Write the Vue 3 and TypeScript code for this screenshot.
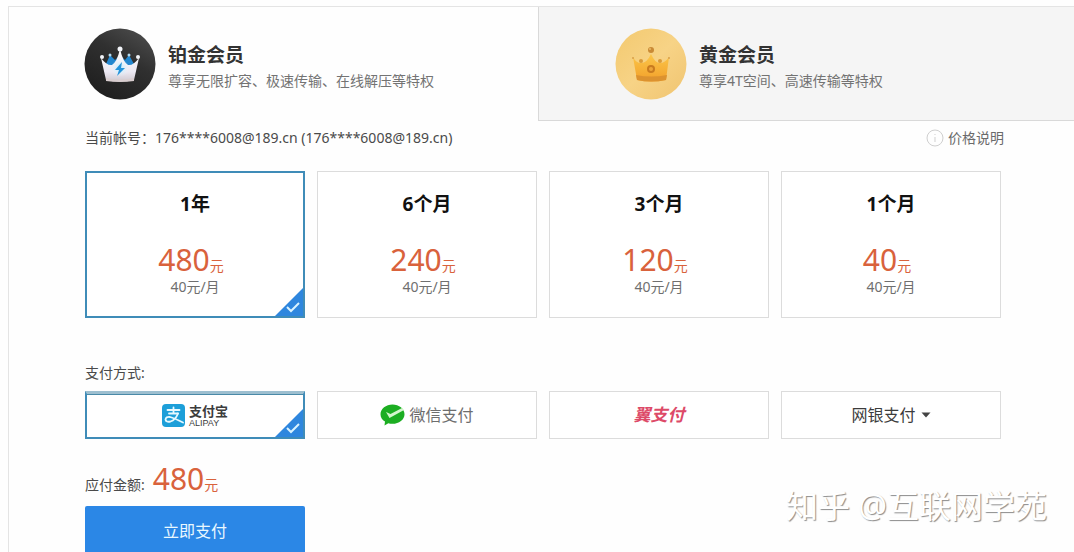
<script setup lang="ts">
import { computed, ref } from 'vue'

interface Tier {
  id: 'platinum' | 'gold'
  name: string
  perks: string
}

interface Plan {
  id: string
  term: string
  price: number
  monthly: string
}

const tiers: Tier[] = [
  { id: 'platinum', name: '铂金会员', perks: '尊享无限扩容、极速传输、在线解压等特权' },
  { id: 'gold', name: '黄金会员', perks: '尊享4T空间、高速传输等特权' },
]

const plans: Plan[] = [
  { id: 'y1', term: '1年', price: 480, monthly: '40元/月' },
  { id: 'm6', term: '6个月', price: 240, monthly: '40元/月' },
  { id: 'm3', term: '3个月', price: 120, monthly: '40元/月' },
  { id: 'm1', term: '1个月', price: 40, monthly: '40元/月' },
]

const methods = ['alipay', 'wechat', 'bestpay'] as const

const tier = ref<Tier['id']>('platinum')
const planId = ref('y1')
const method = ref<string>('alipay')
const bank = ref('bank')

const total = computed(() => plans.find((p) => p.id === planId.value)?.price ?? 0)
</script>

<template>
  <main class="panel">
    <div class="tabs" role="tablist">
      <button
        v-for="t in tiers"
        :key="t.id"
        type="button"
        role="tab"
        class="tab"
        :class="{ active: tier === t.id }"
        :aria-selected="tier === t.id"
        @click="tier = t.id"
      >
        <svg v-if="t.id === 'platinum'" class="badge" viewBox="0 0 72 72" aria-hidden="true">
          <defs>
            <linearGradient id="pBg" x1="0.2" y1="1" x2="0.8" y2="0">
              <stop offset="0" stop-color="#1d1d1d" />
              <stop offset="0.6" stop-color="#303030" />
              <stop offset="1" stop-color="#4c4c4c" />
            </linearGradient>
            <linearGradient id="pCrown" x1="0" y1="0" x2="0" y2="1">
              <stop offset="0" stop-color="#ffffff" />
              <stop offset="0.7" stop-color="#ece9f3" />
              <stop offset="1" stop-color="#cfc8cf" />
            </linearGradient>
            <radialGradient id="pGlow">
              <stop offset="0" stop-color="#b9ecff" />
              <stop offset="1" stop-color="#e8f8ff" stop-opacity="0" />
            </radialGradient>
          </defs>
          <circle cx="36" cy="36" r="35.5" fill="url(#pBg)" />
          <path d="M22 36 L26 27 L31 32 L36 27 L41 32 L45 27 L50 36 L46 42 H27 Z" fill="#2387cf" />
          <path
            d="M17 30 Q23 38 28 37 Q33 34 36 21 Q39 34 44 37 Q49 38 55 30 L50 52 Q36 55 22 52 Z"
            fill="url(#pCrown)"
          />
          <circle cx="36" cy="40" r="9" fill="url(#pGlow)" />
          <path d="M38 34 L31 42 H35 L33 48 L41 40 H37 Z" fill="#2493da" />
          <path d="M22 50 Q36 53 50 50 L50 53 Q36 55 22 53 Z" fill="#d8cdcf" />
          <g fill="#f3f5fa">
            <circle cx="18" cy="29" r="2" />
            <circle cx="54" cy="29" r="2" />
            <circle cx="36" cy="21" r="2.5" />
          </g>
          <g fill="#b5d9ee">
            <circle cx="26" cy="27" r="1.5" />
            <circle cx="45" cy="27" r="1.5" />
          </g>
        </svg>
        <svg v-else class="badge" viewBox="0 0 72 72" aria-hidden="true">
          <defs>
            <linearGradient id="gBg" x1="0" y1="0" x2="1" y2="1">
              <stop offset="0" stop-color="#f3c96f" />
              <stop offset="0.5" stop-color="#f7d386" />
              <stop offset="1" stop-color="#f0c470" />
            </linearGradient>
            <linearGradient id="gCrown" x1="0" y1="0" x2="0" y2="1">
              <stop offset="0" stop-color="#fbc64a" />
              <stop offset="1" stop-color="#f2a02a" />
            </linearGradient>
          </defs>
          <circle cx="36" cy="36" r="35.5" fill="url(#gBg)" />
          <path
            d="M18 29 Q21 35 26 35 Q32 35 36 26 Q40 35 45 35 Q50 35 54 29 L51 52 Q36 55 22 52 Z"
            fill="url(#gCrown)"
          />
          <path d="M21 47 Q36 50 52 47 L51 52 Q36 55 22 52 Z" fill="#dc922f" />
          <circle cx="36" cy="22" r="3" fill="#c98a35" />
          <circle cx="35" cy="21" r="1" fill="#e8b866" />
          <circle cx="26" cy="33" r="2" fill="#d89a3a" />
          <circle cx="45" cy="33" r="2" fill="#d89a3a" />
          <circle cx="18" cy="30" r="1" fill="#d8a04a" />
          <circle cx="54" cy="30" r="1" fill="#d8a04a" />
          <circle cx="36" cy="41" r="4" fill="#c87b1f" />
          <circle cx="36" cy="41" r="2" fill="#eda43a" />
        </svg>
        <span class="tab-text">
          <strong class="tab-name">{{ t.name }}</strong>
          <span class="tab-perks">{{ t.perks }}</span>
        </span>
      </button>
    </div>

    <div class="account">
      <span>当前帐号：176****6008@189.cn (176****6008@189.cn)</span>
      <a class="price-help" href="#price">
        <svg class="info" viewBox="0 0 18 18" aria-hidden="true">
          <circle cx="9" cy="9" r="8" fill="none" stroke="#cfcfcf" />
          <path d="M9 5v1M9 8v5" stroke="#cfcfcf" />
        </svg>
        <span>价格说明</span>
      </a>
    </div>

    <form class="order" @submit.prevent>
      <div class="options plans" role="radiogroup" aria-label="当前帐号">
        <label v-for="p in plans" :key="p.id" class="card plan" :class="{ selected: planId === p.id }">
          <input v-model="planId" class="radio" type="radio" name="plan" :value="p.id" />
          <strong class="term">{{ p.term }}</strong>
          <span class="price"><span class="amount">{{ p.price }}</span>元</span>
          <span class="monthly">{{ p.monthly }}</span>
          <svg v-if="planId === p.id" class="corner" viewBox="0 0 28 28" aria-hidden="true">
            <path d="M28 0V28H0Z" fill="#2e86de" />
            <path d="M12 19l4 4 8-8" fill="none" stroke="#d9f3ff" stroke-width="2" />
          </svg>
        </label>
      </div>

      <p id="pay-label" class="pay-label">支付方式:</p>
      <div class="options" role="radiogroup" aria-labelledby="pay-label">
        <label v-for="m in methods" :key="m" class="card method" :class="{ selected: method === m }">
          <input v-model="method" class="radio" type="radio" name="method" :value="m" />
          <template v-if="m === 'alipay'">
            <svg class="alipay-logo" viewBox="0 0 23 23" aria-hidden="true">
              <rect width="23" height="23" rx="4" fill="#1d9fd9" />
              <g fill="none" stroke="#e6f9ff" stroke-width="1.8" stroke-linecap="round">
                <path d="M11.5 3.5V9.5M5.5 6H17.500M7 9.5H16" />
                <path d="M16 9.5Q13.5 16 8.5 17.5Q4 18.5 3.5 15.5Q3.8 12.5 8 13Q12 14 21 18.5" />
              </g>
            </svg>
            <span class="alipay-text">
              <span class="alipay-cn">支付宝</span>
              <span class="alipay-en">ALIPAY</span>
            </span>
          </template>
          <template v-else-if="m === 'wechat'">
            <svg class="wechat-logo" viewBox="0 0 25 22" aria-hidden="true">
              <path
                d="M12.5 0.5C19 0.5 24.5 4.8 24.5 10.2C24.5 15.6 19 19.8 12.5 19.8C11 19.8 9.6 19.6 8.3 19.2L4.5 21.5L5 17.6C2.2 15.8 0.5 13.2 0.5 10.2C0.5 4.8 6 0.5 12.5 0.5Z"
                fill="#1cae22"
              />
              <path d="M6 8L9.500 14L24 6L22 4L10.5 10Z" fill="#d3f6cc" />
            </svg>
            <span class="wechat-text">微信支付</span>
          </template>
          <span v-else class="bestpay">翼支付</span>
          <svg v-if="method === m" class="corner" viewBox="0 0 28 28" aria-hidden="true">
            <path d="M28 0V28H0Z" fill="#2e86de" />
            <path d="M12 19l4 4 8-8" fill="none" stroke="#d9f3ff" stroke-width="2" />
          </svg>
        </label>
        <div class="card method">
          <select v-model="bank" class="bank" aria-label="网银支付">
            <option value="bank">网银支付</option>
          </select>
          <svg class="caret" viewBox="0 0 10 6" aria-hidden="true">
            <path d="M0.5 0.5H9.5L5 5.5Z" fill="#444" />
          </svg>
        </div>
      </div>

      <p class="total">
        <span>应付金额:</span>
        <span class="price"><span class="amount">{{ total }}</span>元</span>
      </p>
      <div class="options">
        <button type="submit" class="submit">立即支付</button>
      </div>
    </form>

    <div class="watermark">知乎 @互联网学苑</div>
  </main>
</template>

<style>
html {
  scrollbar-width: none;
}
body {
  background: #fefefe;
}
</style>

<style scoped>
.panel {
  position: relative;
  box-sizing: border-box;
  height: calc(100vh - 6px);
  margin: 6px 0 0 8px;
  border-top: 1px solid #e4e4e4;
  border-left: 1px solid #e4e4e4;
  overflow: hidden;
  color: #4a4a4a;
  font-family: 'Noto Sans', 'Open Sans', 'Noto Sans CJK SC', sans-serif;
  font-size: 14px;
  line-height: 20px;
}
p {
  margin: 0;
}
button,
select {
  font-family: inherit;
}
.tabs {
  display: grid;
  grid-template-columns: 529fr 536fr;
}
.tab {
  display: flex;
  align-items: center;
  gap: 12px;
  height: 114px;
  padding: 0 0 0 76px;
  border: 0;
  border-bottom: 1px solid #d9d9d9;
  border-left: 1px solid #d9d9d9;
  background: #f5f5f5;
  text-align: left;
  cursor: pointer;
}
.tab.active {
  padding-left: 74px;
  border-color: transparent;
  background: transparent;
}
.badge {
  flex: none;
  width: 72px;
  height: 72px;
}
.tab-text {
  display: grid;
  gap: 4px;
  padding-top: 6px;
}
.tab-name {
  color: #333;
  font-size: 19px;
  line-height: 24px;
}
.tab-perks {
  color: #737373;
  font-size: 14px;
  line-height: 20px;
}
.account {
  display: flex;
  justify-content: space-between;
  margin-top: 7px;
  padding: 0 70px 0 76px;
}
.price-help {
  display: flex;
  align-items: center;
  gap: 4px;
  color: #6a6a6a;
  text-decoration: none;
}
.info {
  width: 18px;
  height: 18px;
}
.order {
  padding: 0 73px 0 76px;
}
.options {
  display: grid;
  grid-template-columns: repeat(4, 1fr);
  gap: 12px;
}
.plans {
  margin-top: 23px;
}
.card {
  position: relative;
  display: flex;
  box-sizing: border-box;
  border: 1px solid #dcdcdc;
  background: #fff;
  cursor: pointer;
}
.card.selected {
  border: 2px solid #3f8cb8;
}
.radio {
  position: absolute;
  inset: 0;
  margin: 0;
  opacity: 0;
}
.corner {
  position: absolute;
  right: 0;
  bottom: 0;
  width: 28px;
  height: 28px;
}
.plan {
  flex-direction: column;
  align-items: center;
  height: 147px;
  padding-top: 20px;
}
.plan.selected {
  padding-top: 19px;
}
.term {
  color: #111;
  font-size: 19px;
  line-height: 24px;
}
.price {
  color: #d9623c;
  font-size: 14px;
  line-height: 20px;
}
.amount {
  font-size: 30px;
  line-height: 34px;
}
.plan .price {
  margin-top: 27px;
  padding-right: 8px;
}
.monthly {
  color: #6f6f6f;
  line-height: 20px;
}
.pay-label {
  margin: 45px 0 8px;
}
.method {
  align-items: center;
  justify-content: center;
  height: 48px;
  gap: 4px;
}
.card.method.selected {
  border-top: 3px solid #9dbfd0;
  box-shadow: inset 0 1px #4a8aa8;
}
.alipay-logo {
  width: 23px;
  height: 23px;
}
.alipay-text {
  display: grid;
  color: #3c3c3c;
}
.alipay-cn {
  font-size: 13px;
  font-weight: 700;
  line-height: 14px;
}
.alipay-en {
  font-family: 'Liberation Sans', sans-serif;
  font-size: 9px;
  line-height: 10px;
}
.wechat-logo {
  width: 25px;
  height: 22px;
}
.wechat-text {
  color: #6e6e6e;
  font-size: 16px;
}
.bestpay {
  color: #dd4a68;
  font-size: 17px;
  font-style: italic;
  font-weight: 700;
}
.bank {
  padding: 0;
  border: 0;
  background: transparent;
  color: #3c3c3c;
  font-size: 16px;
  line-height: 24px;
  appearance: none;
}
.caret {
  width: 10px;
  height: 6px;
}
.total {
  display: flex;
  align-items: baseline;
  gap: 8px;
  margin: 23px 0 10px;
}
.submit {
  height: 48px;
  border: 0;
  border-radius: 2px;
  background: #2b87e6;
  color: #e9f8ff;
  font-size: 16px;
  cursor: pointer;
}
.watermark {
  position: absolute;
  right: 27px;
  bottom: 24px;
  color: #fff;
  font-size: 32px;
  line-height: 44px;
  text-shadow: 1px 1px 1px #8c8c8c;
  pointer-events: none;
}
</style>
